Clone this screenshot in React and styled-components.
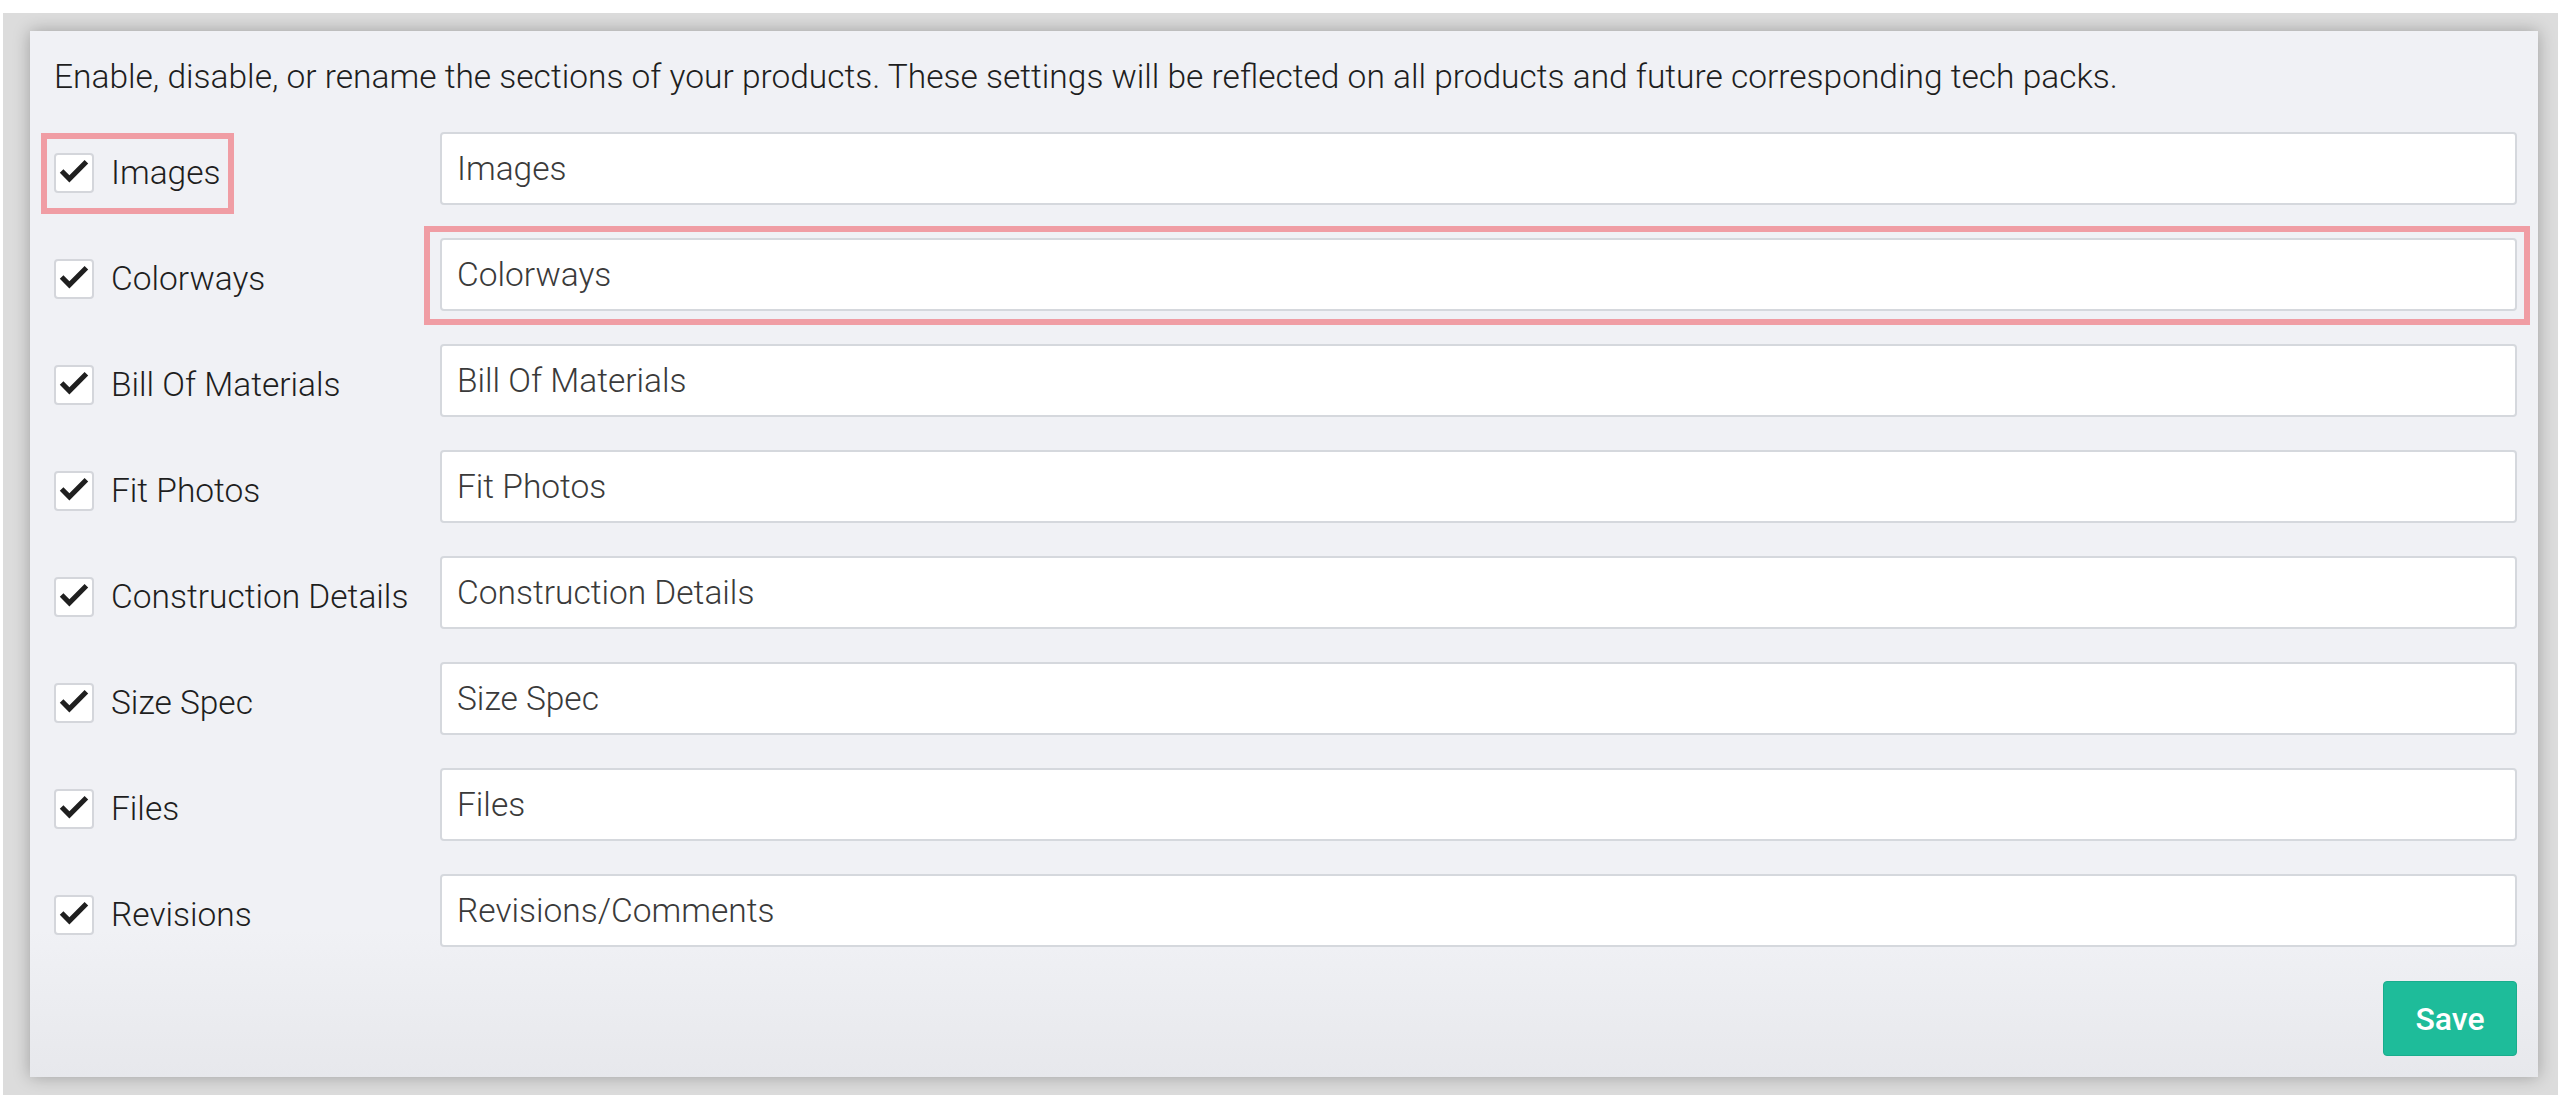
import React from "react";
import styled, { createGlobalStyle, css } from "styled-components";

const GlobalStyle = createGlobalStyle`
    html, body {
        margin: 0;
        padding: 0;
        background: #ffffff;
        font-family: Roboto, "Liberation Sans", Arial, sans-serif;
    }
    * { box-sizing: border-box; }
`

const Frame = styled.div`
    width: 2555px;
    height: 1082px;
    margin: 13px 0 0 3px;
    padding: 18px 20px 18px 27px;
    background: #dcdcdc;
`

const Panel = styled.div`
    height: 100%;
    display: flex;
    flex-direction: column;
    padding: 26px 21px 21px 24px;
    background: linear-gradient(to bottom, #f0f1f5 0%, #f0f1f5 86%, #e7e8ec 100%);
    box-shadow: 0 0 16px rgba(0, 0, 0, 0.28);
`

const Intro = styled.p`
    margin: 0 0 35px 0;
    font-size: 33.5px;
    font-weight: 300;
    line-height: 40px;
    color: #1e1e1e;
`

const Rows = styled.div`
    display: flex;
    flex-direction: column;
    gap: 33px;
`

const Row = styled.div`
    display: grid;
    grid-template-columns: 386px 1fr;
    align-items: center;
    height: 73px;
`

const pinkFrame = css`
    position: relative;
    &::after {
        content: "";
        position: absolute;
        border: 6px solid #f09da4;
        pointer-events: none;
    }
`

const Toggle = styled.label`
    display: inline-flex;
    align-items: center;
    gap: 17px;
    justify-self: start;
    margin-top: 8px;
    cursor: pointer;
    ${p => p.$marked && css`
        ${pinkFrame}
        &::after { top: -20px; left: -13px; right: -13px; bottom: -21px; }
    `}
`

const Box = styled.span`
    width: 40px;
    height: 40px;
    display: flex;
    align-items: center;
    justify-content: center;
    background: #fff;
    border: 2px solid #d4d6db;
    border-radius: 4px;
    svg { display: block; }
`

const LabelText = styled.span`
    font-size: 33.5px;
    font-weight: 300;
    line-height: 40px;
    color: #1e1e1e;
    white-space: nowrap;
`

const Field = styled.div`
    height: 73px;
    ${p => p.$marked && css`
        ${pinkFrame}
        &::after { top: -12px; left: -16px; right: -13px; bottom: -14px; }
    `}
`

const NameInput = styled.input`
    width: 100%;
    height: 100%;
    padding: 0 15px;
    border: 2px solid #d5d8dd;
    border-radius: 4px;
    background: #fff;
    font-family: Roboto, "Liberation Sans", Arial, sans-serif;
    font-size: 33.5px;
    font-weight: 300;
    color: #3a3a3a;
    outline: none;
`

const Footer = styled.div`
    display: flex;
    justify-content: flex-end;
    margin-top: 34px;
`

const SaveButton = styled.button`
    width: 134px;
    height: 75px;
    border: 1px solid #19ad8d;
    border-radius: 4px;
    background: #1ebc9a;
    color: #fff;
    font-family: Roboto, "Liberation Sans", Arial, sans-serif;
    font-size: 32px;
    font-weight: 500;
    cursor: pointer;
`

const sections = [
    { label: "Images", name: "Images" },
    { label: "Colorways", name: "Colorways" },
    { label: "Bill Of Materials", name: "Bill Of Materials" },
    { label: "Fit Photos", name: "Fit Photos" },
    { label: "Construction Details", name: "Construction Details" },
    { label: "Size Spec", name: "Size Spec" },
    { label: "Files", name: "Files" },
    { label: "Revisions", name: "Revisions/Comments" },
]

function Check() {
    return (
        <svg width="32" height="32" viewBox="0 0 32 32">
            <path d="M1.8 15.8 L5.4 12.2 L11.4 18.3 L26.6 3 L30.2 6.6 L11.4 25.6 Z" fill="#1f1f1f" />
        </svg>
    )
}

export default function App() {
    return (
        <>
            <GlobalStyle />
            <Frame>
                <Panel>
                    <Intro>
                        Enable, disable, or rename the sections of your products. These settings will be reflected on all products and future corresponding tech packs.
                    </Intro>
                    <Rows>
                        {sections.map((s, i) => (
                            <Row key={s.label}>
                                <Toggle $marked={i === 0}>
                                    <Box><Check /></Box>
                                    <LabelText>{s.label}</LabelText>
                                </Toggle>
                                <Field $marked={i === 1}>
                                    <NameInput defaultValue={s.name} />
                                </Field>
                            </Row>
                        ))}
                    </Rows>
                    <Footer>
                        <SaveButton>Save</SaveButton>
                    </Footer>
                </Panel>
            </Frame>
        </>
    )
}
